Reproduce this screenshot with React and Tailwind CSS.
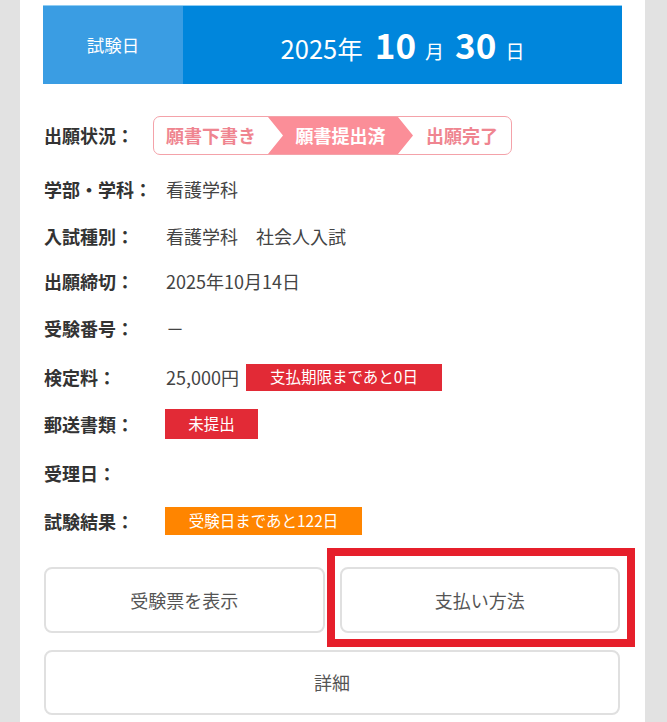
import React from "react";

const font = { fontFamily: '"Noto Sans CJK JP", "Noto Sans", sans-serif' };

function Row({ label, children, className = "" }) {
  return (
    <div className={`flex h-[30px] items-center ${className}`}>
      <div className="w-[123px] shrink-0 pl-[1px] text-[18px] font-bold text-[#333]">{label}</div>
      <div className="flex items-center text-[18px] text-[#444]">{children}</div>
    </div>
  );
}

export default function App() {
  return (
    <div className="min-h-[722px] bg-[#e2e2e2] pl-[20px] pr-[22px]" style={font}>
      <div className="min-h-[722px] bg-white px-[23px] pt-[5px] pb-[20px]">
        {/* Exam date banner */}
        <div className="flex h-[79px] border-t border-[#8fcdf3]">
          <div className="flex w-[140px] items-center justify-center bg-[#3a9de3] text-[17.5px] text-white">
            試験日
          </div>
          <div className="flex flex-1 items-baseline justify-center bg-[#0086dc] pt-[20px] text-white">
            <span className="text-[25.5px] leading-none">2025年</span>
            <span className="ml-[12px] text-[35px] font-bold leading-none">10</span>
            <span className="ml-[9px] text-[19px] leading-none">月</span>
            <span className="ml-[11px] text-[35px] font-bold leading-none">30</span>
            <span className="ml-[9px] text-[19px] leading-none">日</span>
          </div>
        </div>

        {/* Application status */}
        <div className="mt-[32px] flex h-[39px] items-center">
          <div className="w-[110px] shrink-0 pl-[1px] text-[18px] font-bold text-[#333]">出願状況：</div>
          <div className="flex h-[39px] w-[359px] overflow-hidden rounded-[7px] border-[1.5px] border-[#f4a2a9] text-[18px] font-bold">
            <div className="flex w-[114px] items-center justify-center text-[#ef8590]">願書下書き</div>
            <div className="flex w-[145px] items-center justify-center bg-[#fb8e98] text-white [clip-path:polygon(0_0,130px_0,100%_50%,130px_100%,0_100%,15px_50%)]">
              願書提出済
            </div>
            <div className="flex flex-1 items-center justify-center text-[#ef8590]">出願完了</div>
          </div>
        </div>

        {/* Details */}
        <Row label="学部・学科：" className="mt-[19px]">看護学科</Row>
        <Row label="入試種別：" className="mt-[17px]">看護学科　社会人入試</Row>
        <Row label="出願締切：" className="mt-[15px]">2025年10月14日</Row>
        <Row label="受験番号：" className="mt-[17px]">－</Row>
        <Row label="検定料：" className="mt-[19px]">
          <span>25,000円</span>
          <span className="ml-[7px] flex h-[27px] w-[196px] items-center justify-center bg-[#e22a36] text-[15.5px] text-white">
            支払期限まであと0日
          </span>
        </Row>
        <Row label="郵送書類：" className="mt-[17px]">
          <span className="-ml-[1px] flex h-[30px] w-[93px] items-center justify-center bg-[#e22a36] text-[15.5px] text-white">
            未提出
          </span>
        </Row>
        <Row label="受理日：" className="mt-[19px]"></Row>
        <Row label="試験結果：" className="mt-[18px]">
          <span className="-ml-[1px] flex h-[28px] w-[197px] items-center justify-center bg-[#ff8500] text-[15.5px] text-white">
            受験日まであと122日
          </span>
        </Row>

        {/* Buttons */}
        <div className="ml-[1px] mr-[2px] mt-[31px] grid grid-cols-2 gap-[15px]">
          <button className="flex h-[66px] items-center justify-center rounded-[8px] border-2 border-[#e0e0e0] bg-white text-[18px] text-[#555]">
            受験票を表示
          </button>
          <div className="relative">
            <button className="flex h-[66px] w-full items-center justify-center rounded-[8px] border-2 border-[#e0e0e0] bg-white text-[18px] text-[#555]">
              支払い方法
            </button>
            <div className="pointer-events-none absolute -top-[19px] -bottom-[14px] -left-[13px] -right-[15px] border-[8px] border-[#e61f2b]"></div>
          </div>
        </div>
        <div className="ml-[1px] mr-[2px] mt-[17px]">
          <button className="flex h-[65px] w-full items-center justify-center rounded-[8px] border-2 border-[#e0e0e0] bg-white text-[18px] text-[#555]">
            詳細
          </button>
        </div>
      </div>
    </div>
  );
}
